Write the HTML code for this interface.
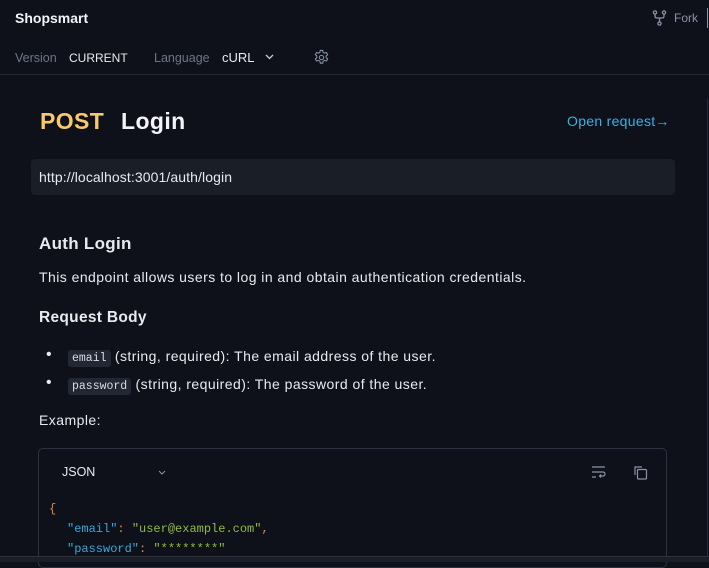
<!DOCTYPE html>
<html><head><style>
*{margin:0;padding:0;box-sizing:border-box}
body{width:709px;height:562px;overflow:hidden;background:#0e1119;font-family:"Liberation Sans",sans-serif;color:#e8eaee;position:relative}
.a{position:absolute;white-space:nowrap}
.t{letter-spacing:.45px}
code{font-family:"Liberation Mono",monospace;font-size:11.5px;background:#222734;border-radius:3px;padding:2px 4px;color:#d8dce4;letter-spacing:0}
</style></head><body>
<div class="a" style="left:15px;top:10px;font-size:14px;font-weight:bold;color:#f2f4f7">Shopsmart</div>
<svg class="a" style="left:652px;top:10px" width="15" height="16" viewBox="0 0 15 16" fill="none" stroke="#8a93a6" stroke-width="1.3"><circle cx="3" cy="2.5" r="1.6"/><circle cx="12" cy="2.5" r="1.6"/><circle cx="7.5" cy="13.5" r="1.6"/><path d="M3 4v2q0 2 2 2h5q2 0 2-2V4M7.5 8v4"/></svg>
<div class="a" style="left:674px;top:11px;font-size:12px;color:#8a93a6">Fork</div>
<div class="a" style="left:707px;top:8px;width:1px;height:20px;background:#8a93a6"></div>
<div class="a" style="left:15px;top:51px;font-size:12.5px;color:#6c7589">Version</div>
<div class="a" style="left:69px;top:51px;font-size:12px;color:#e8eaee">CURRENT</div>
<div class="a" style="left:154px;top:51px;font-size:12.5px;color:#6c7589">Language</div>
<div class="a" style="left:222px;top:50px;font-size:13px;color:#e8eaee">cURL</div>
<svg class="a" style="left:265px;top:54px" width="9" height="6" viewBox="0 0 9 6" fill="none" stroke="#c8ccd4" stroke-width="1.3"><path d="M1 1l3.5 3.5L8 1"/></svg>
<svg class="a" style="left:313px;top:49px" width="17" height="17" viewBox="0 0 24 24" fill="none" stroke="#8a93a6" stroke-width="1.5"><path d="M10.3 2h3.4l.6 2.8 2 1.1 2.7-.9 1.7 2.9-2.1 1.9v2.4l2.1 1.900-1.7 2.9-2.7-.9-2 1.1-.6 2.8h-3.4l-.6-2.8-2-1.1-2.7.9-1.7-2.9 2.1-1.9v-2.4L3.3 7.9 5 5l2.7.9 2-1.1z"/><circle cx="12" cy="12" r="3"/></svg>
<div class="a" style="left:0;top:74px;width:709px;height:1px;background:#242836"></div>
<div class="a" style="left:707px;top:98px;width:1px;height:458px;background:#242836"></div>
<div class="a" style="left:40px;top:108px;font-size:23px;font-weight:bold;color:#f8c86b;letter-spacing:.4px">POST</div>
<div class="a" style="left:121px;top:108px;font-size:23px;font-weight:bold;color:#f2f4f7;letter-spacing:.4px">Login</div>
<div class="a" style="left:567px;top:113px;font-size:14px;color:#33b3e6;letter-spacing:.3px">Open request→</div>
<div class="a" style="left:31px;top:159px;width:644px;height:36px;background:#1a1e27;border-radius:4px"></div>
<div class="a t" style="left:39px;top:169px;font-size:14px;color:#e8eaee;letter-spacing:.1px">http://localhost:3001/auth/login</div>
<div class="a" style="left:39px;top:234px;font-size:17px;font-weight:bold;letter-spacing:.3px">Auth Login</div>
<div class="a t" style="left:39px;top:269px;font-size:14px">This endpoint allows users to log in and obtain authentication credentials.</div>
<div class="a" style="left:39px;top:309px;font-size:15.5px;font-weight:bold;letter-spacing:.3px">Request Body</div>
<div class="a" style="left:46px;top:346px;font-size:16px">•</div>
<div class="a t" style="left:68px;top:348px;font-size:14px"><code>email</code> (string, required): The email address of the user.</div>
<div class="a" style="left:46px;top:374px;font-size:16px">•</div>
<div class="a t" style="left:68px;top:376px;font-size:14px"><code>password</code> (string, required): The password of the user.</div>
<div class="a t" style="left:39px;top:412px;font-size:14px">Example:</div>
<div class="a" style="left:38px;top:448px;width:629px;height:120px;border:1px solid #2d3240;border-radius:5px"></div>
<div class="a" style="left:62px;top:465px;font-size:12.5px">JSON</div>
<svg class="a" style="left:158px;top:470px" width="8" height="5" viewBox="0 0 8 5" fill="none" stroke="#8a93a6" stroke-width="1"><path d="M1 1l3 3 3-3"/></svg>
<svg class="a" style="left:591px;top:465px" width="15" height="14" viewBox="0 0 15 14" fill="none" stroke="#8a93a6" stroke-width="1.2"><path d="M1 2h13M1 7h11a2 2 0 010 4h-3M1 12h4M10 9.5l-1.5 1.5 1.5 1.5"/></svg>
<svg class="a" style="left:633px;top:465px" width="15" height="15" viewBox="0 0 15 15" fill="none" stroke="#8a93a6" stroke-width="1.2"><rect x="4.5" y="4.5" width="9" height="9.5" rx="1"/><path d="M2 10V2h7"/></svg>
<div class="a" style="left:49px;top:499px;font-family:'Liberation Mono',monospace;font-size:12px;line-height:20px;color:#d8dce4">
<span style="color:#e08a3c">{</span><br>
<span style="padding-left:18px;color:#39a7d9">"email"</span><span style="color:#e08a3c">:</span> <span style="color:#8fbd3a">"user@example.com"</span><span style="color:#e08a3c">,</span><br>
<span style="padding-left:18px;color:#39a7d9">"password"</span><span style="color:#e08a3c">:</span> <span style="color:#8fbd3a">"********"</span>
</div>
<div class="a" style="left:0;top:556px;width:709px;height:6px;background:#1a1e26;border-top:1px solid #2d3240"></div>
</body></html>
